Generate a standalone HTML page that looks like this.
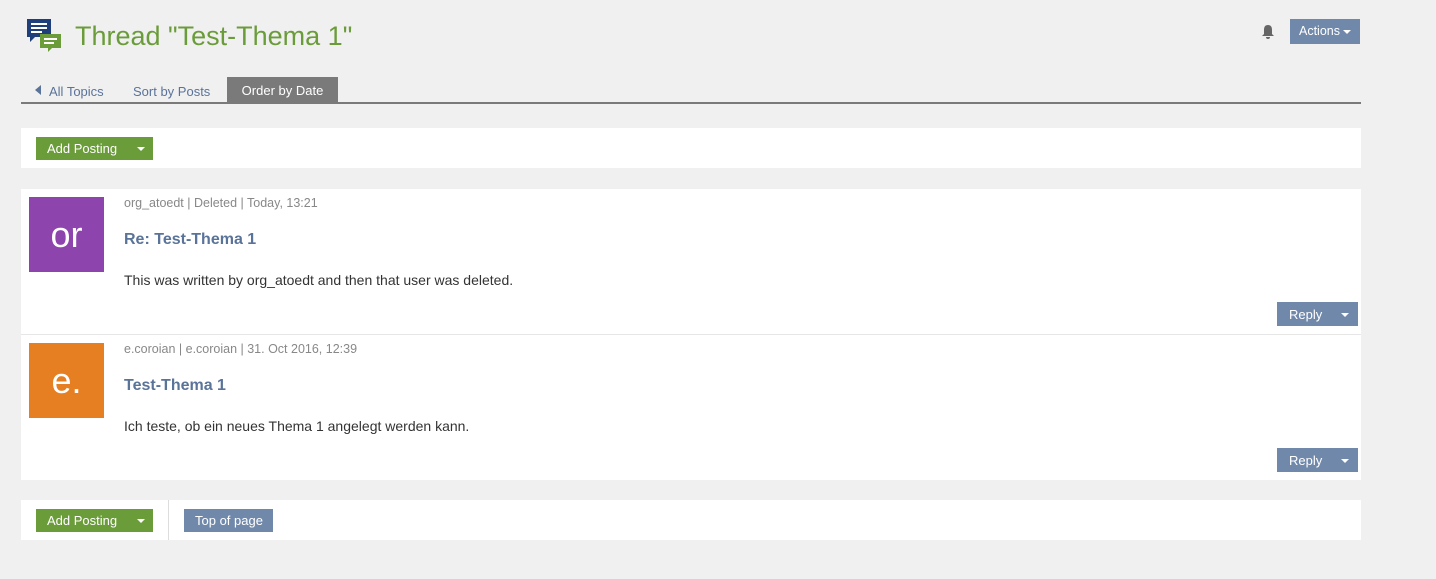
<!DOCTYPE html>
<html><head><meta charset="utf-8"><style>
*{margin:0;padding:0;box-sizing:border-box}
body{width:1436px;height:579px;background:#f0f0f0;font-family:"Liberation Sans",sans-serif;position:relative;overflow:hidden}
.a{position:absolute}
.btn{position:absolute;color:#fff;font-size:13px;line-height:23px;padding-left:11px}
.green{background:#6b9c3a}
.blue{background:#7089ab}
.caret{position:absolute;width:0;height:0;border-left:4px solid transparent;border-right:4px solid transparent;border-top:4px solid #fff}
.meta{font-size:12.5px;color:#888}
.ttl{font-size:16px;font-weight:bold;color:#5a7399}
.body{font-size:14px;color:#333}
.av{position:absolute;width:75px;height:75px;color:#fff;font-size:36px;text-align:center;line-height:75px}
</style></head><body>
<svg class="a" style="left:25px;top:18px" width="37" height="36" viewBox="0 0 37 36">
<path d="M2 1h24v18H10l-5 5v-5H2z" fill="#1e3f7a"/>
<rect x="6" y="5" width="16" height="2" fill="#fff"/><rect x="6" y="9" width="16" height="2" fill="#fff"/><rect x="6" y="13" width="11" height="2" fill="#fff"/>
<path d="M15 16h21v14H27l-4 4v-4h-8z" fill="#6b9c3a"/>
<rect x="19" y="20" width="13" height="2" fill="#fff"/><rect x="19" y="24" width="10" height="2" fill="#fff"/>
</svg>
<div class="a" style="left:75px;top:21px;font-size:27px;color:#6b9c3a">Thread "Test-Thema 1"</div>
<svg class="a" style="left:1261px;top:24px" width="14" height="16" viewBox="0 0 14 16"><path d="M7 1c-3 0-4 2-4 5v4l-2 2h12l-2-2V6c0-3-1-5-4-5z M5 13h4a2 2 0 0 1-4 0z" fill="#666"/></svg>
<div class="btn blue" style="left:1290px;top:19px;width:70px;height:25px;line-height:25px;font-size:12.5px;padding-left:9px">Actions</div>
<div class="caret" style="left:1343px;top:30px"></div>
<div class="a" style="left:35px;top:85px;width:0;height:0;border-top:5px solid transparent;border-bottom:5px solid transparent;border-right:6px solid #5a7399"></div>
<div class="a" style="left:49px;top:84px;font-size:13px;color:#5a7399">All Topics</div>
<div class="a" style="left:133px;top:84px;font-size:13px;color:#5a7399">Sort by Posts</div>
<div class="a" style="left:227px;top:77px;width:111px;height:25px;background:#7a7a7a;color:#fff;font-size:13px;line-height:28px;text-align:center">Order by Date</div>
<div class="a" style="left:21px;top:102px;width:1340px;height:2px;background:#7a7a7a"></div>
<div class="a" style="left:21px;top:128px;width:1340px;height:40px;background:#fff"></div>
<div class="btn green" style="left:36px;top:137px;width:117px;height:23px">Add Posting</div>
<div class="caret" style="left:137px;top:147px"></div>
<div class="a" style="left:21px;top:189px;width:1340px;height:291px;background:#fff"></div>
<div class="av" style="left:29px;top:197px;background:#8e44ad">or</div>
<div class="a meta" style="left:124px;top:196px">org_atoedt | Deleted | Today, 13:21</div>
<div class="a ttl" style="left:124px;top:231px">Re: Test-Thema 1</div>
<div class="a body" style="left:124px;top:272px">This was written by org_atoedt and then that user was deleted.</div>
<div class="btn blue" style="left:1277px;top:302px;width:81px;height:24px;line-height:25px;padding-left:12px">Reply</div>
<div class="caret" style="left:1341px;top:313px"></div>
<div class="a" style="left:21px;top:334px;width:1340px;height:1px;background:#e6e6e6"></div>
<div class="av" style="left:29px;top:343px;background:#e67e22">e.</div>
<div class="a meta" style="left:124px;top:342px">e.coroian | e.coroian | 31. Oct 2016, 12:39</div>
<div class="a ttl" style="left:124px;top:377px">Test-Thema 1</div>
<div class="a body" style="left:124px;top:418px">Ich teste, ob ein neues Thema 1 angelegt werden kann.</div>
<div class="btn blue" style="left:1277px;top:448px;width:81px;height:24px;line-height:25px;padding-left:12px">Reply</div>
<div class="caret" style="left:1341px;top:459px"></div>
<div class="a" style="left:21px;top:500px;width:1340px;height:40px;background:#fff"></div>
<div class="btn green" style="left:36px;top:509px;width:117px;height:23px">Add Posting</div>
<div class="caret" style="left:137px;top:519px"></div>
<div class="a" style="left:168px;top:500px;width:1px;height:40px;background:#ddd"></div>
<div class="btn blue" style="left:184px;top:509px;width:89px;height:23px">Top of page</div>
</body></html>
